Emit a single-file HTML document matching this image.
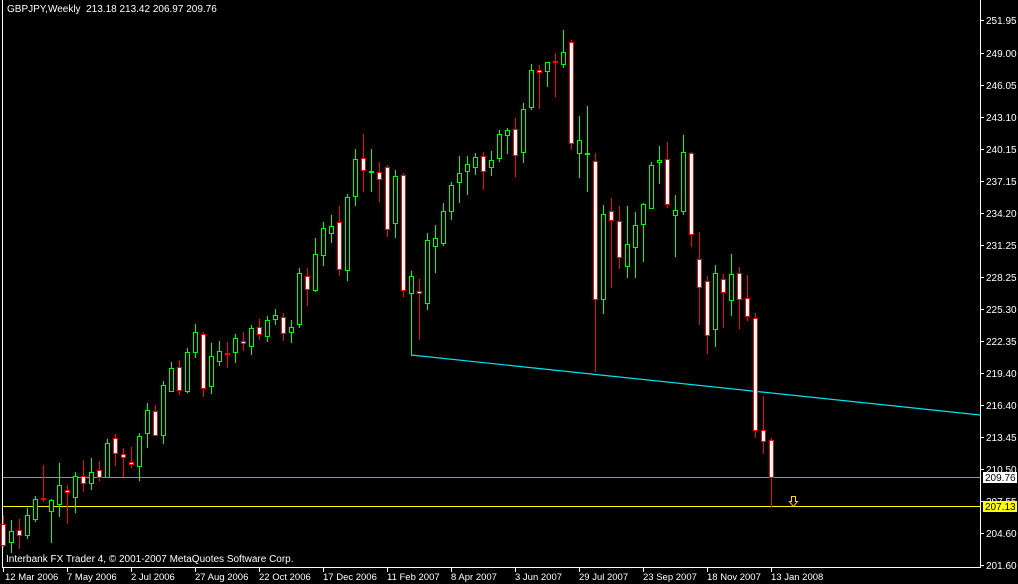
<!DOCTYPE html>
<html><head><meta charset="utf-8"><style>
html,body{margin:0;padding:0;background:#000;width:1018px;height:584px;overflow:hidden}
svg{display:block}
text{font-family:"Liberation Sans","DejaVu Sans",sans-serif;font-size:10px;fill:#fff}
.d text{font-size:9.5px}
</style></head><body>
<svg width="1018" height="584" viewBox="0 0 1018 584" shape-rendering="crispEdges">
<rect width="1018" height="584" fill="#000"/>
<path d="M2.5 0V567.5H980.5V0" stroke="#fff" fill="none"/>
<path d="M3.5 567V572M67.5 567V572M131.5 567V572M195.5 567V572M259.5 567V572M323.5 567V572M387.5 567V572M451.5 567V572M515.5 567V572M579.5 567V572M643.5 567V572M707.5 567V572M771.5 567V572" stroke="#fff"/>
<path d="M980 20.5H984M980 53.5H984M980 85.5H984M980 117.5H984M980 149.5H984M980 181.5H984M980 213.5H984M980 245.5H984M980 277.5H984M980 309.5H984M980 341.5H984M980 373.5H984M980 405.5H984M980 437.5H984M980 469.5H984M980 501.5H984M980 533.5H984M980 565.5H984" stroke="#fff"/>
<g>
<text x="986" y="24">251.95</text><text x="986" y="57">249.00</text><text x="986" y="89">246.05</text><text x="986" y="121">243.10</text><text x="986" y="153">240.15</text><text x="986" y="185">237.15</text><text x="986" y="217">234.20</text><text x="986" y="249">231.25</text><text x="986" y="281">228.25</text><text x="986" y="313">225.30</text><text x="986" y="345">222.35</text><text x="986" y="377">219.40</text><text x="986" y="409">216.40</text><text x="986" y="441">213.45</text><text x="986" y="473">210.50</text><text x="986" y="505">207.55</text><text x="986" y="537">204.60</text><text x="986" y="569">201.60</text>
</g>
<path d="M3 477.5H980" stroke="#8a96a6"/>
<path d="M3 506.5H980" stroke="#ffff00"/>
<rect x="983" y="472" width="34" height="11" fill="#fff"/>
<text x="985" y="481" style="fill:#000">209.76</text>
<rect x="983" y="501" width="34" height="11" fill="#ffff00"/>
<text x="985" y="510" style="fill:#000">207.13</text>
<line x1="411" y1="355" x2="980" y2="415" stroke="#00e5ee" shape-rendering="auto" stroke-width="1.2"/>
<path stroke="#00ff00" d="M11.5 520V553M27.5 508V539M35.5 496V522M51.5 499V543M59.5 463V517M75.5 472V513M91.5 458V490M107.5 439V477M139.5 433V481M147.5 403V448M163.5 381V444M171.5 362V392M187.5 348V393M195.5 324V358M211.5 343V394M219.5 341V366M235.5 334V363M251.5 325V355M267.5 316V342M275.5 309V325M291.5 320V343M299.5 268V328M315.5 238V292M323.5 222V266M331.5 215V243M347.5 194V281M355.5 149V206M371.5 149V192M395.5 170V238M411.5 271V356M427.5 233V310M435.5 225V273M443.5 203V246M451.5 182V220M459.5 156V203M467.5 156V195M475.5 153V175M491.5 151V176M499.5 130V162M507.5 128V154M523.5 103V163M531.5 64V110M547.5 62V87M563.5 30V68M579.5 116V178M587.5 106V192M603.5 205V314M627.5 206V278M635.5 212V278M643.5 203V262M651.5 162V209M659.5 146V184M675.5 195V257M683.5 135V215M715.5 265V347M731.5 254V316"/>
<g fill="#000" stroke="#00ff00">
<rect x="9.5" y="531.5" width="4" height="11"/><rect x="25.5" y="515.5" width="4" height="20"/><rect x="33.5" y="499.5" width="4" height="20"/><rect x="49.5" y="500.5" width="4" height="11"/><rect x="57.5" y="485.5" width="4" height="19"/><rect x="73.5" y="476.5" width="4" height="21"/><rect x="89.5" y="472.5" width="4" height="11"/><rect x="105.5" y="443.5" width="4" height="34"/><rect x="137.5" y="436.5" width="4" height="30"/><rect x="145.5" y="410.5" width="4" height="23"/><rect x="161.5" y="385.5" width="4" height="50"/><rect x="169.5" y="368.5" width="4" height="23"/><rect x="185.5" y="352.5" width="4" height="39"/><rect x="193.5" y="332.5" width="4" height="20"/><rect x="209.5" y="356.5" width="4" height="30"/><rect x="217.5" y="351.5" width="4" height="10"/><rect x="233.5" y="338.5" width="4" height="14"/><rect x="249.5" y="328.5" width="4" height="18"/><rect x="265.5" y="320.5" width="4" height="16"/><rect x="273.5" y="315.5" width="4" height="4"/><rect x="289.5" y="327.5" width="4" height="5"/><rect x="297.5" y="273.5" width="4" height="51"/><rect x="313.5" y="254.5" width="4" height="36"/><rect x="321.5" y="228.5" width="4" height="27"/><rect x="329.5" y="226.5" width="4" height="7"/><rect x="345.5" y="197.5" width="4" height="73"/><rect x="353.5" y="159.5" width="4" height="37"/><rect x="369.5" y="171.5" width="4" height="1"/><rect x="393.5" y="176.5" width="4" height="47"/><rect x="409.5" y="276.5" width="4" height="17"/><rect x="425.5" y="240.5" width="4" height="63"/><rect x="433.5" y="238.5" width="4" height="8"/><rect x="441.5" y="211.5" width="4" height="32"/><rect x="449.5" y="185.5" width="4" height="26"/><rect x="457.5" y="173.5" width="4" height="9"/><rect x="465.5" y="164.5" width="4" height="7"/><rect x="473.5" y="157.5" width="4" height="10"/><rect x="489.5" y="160.5" width="4" height="7"/><rect x="497.5" y="134.5" width="4" height="24"/><rect x="505.5" y="130.5" width="4" height="5"/><rect x="521.5" y="109.5" width="4" height="43"/><rect x="529.5" y="70.5" width="4" height="37"/><rect x="545.5" y="62.5" width="4" height="9"/><rect x="561.5" y="52.5" width="4" height="12"/><rect x="577.5" y="140.5" width="4" height="13"/><rect x="585.5" y="153.5" width="4" height="1"/><rect x="601.5" y="214.5" width="4" height="85"/><rect x="625.5" y="244.5" width="4" height="22"/><rect x="633.5" y="225.5" width="4" height="22"/><rect x="641.5" y="204.5" width="4" height="20"/><rect x="649.5" y="165.5" width="4" height="43"/><rect x="657.5" y="160.5" width="4" height="2"/><rect x="673.5" y="210.5" width="4" height="5"/><rect x="681.5" y="152.5" width="4" height="59"/><rect x="713.5" y="273.5" width="4" height="56"/><rect x="729.5" y="274.5" width="4" height="26"/>
</g>
<path stroke="#ff0000" d="M3.5 515V548M19.5 519V549M43.5 465V502M67.5 485V524M83.5 460V492M99.5 461V481M115.5 434V466M123.5 448V477M131.5 447V468M155.5 405V436M179.5 360V395M203.5 332V397M227.5 342V368M243.5 332V351M259.5 319V340M283.5 313V341M307.5 268V306M339.5 206V276M363.5 134V192M379.5 162V202M387.5 165V237M403.5 173V297M419.5 279V340M483.5 152V190M515.5 118V177M539.5 65V109M555.5 53V97M571.5 40V150M595.5 153V372M611.5 198V288M619.5 206V269M667.5 142V208M691.5 152V247M699.5 232V325M707.5 276V354M723.5 274V328M739.5 267V329M747.5 275V321M755.5 313V438M763.5 396V454M771.5 438V507"/>
<g fill="#fff" stroke="#ff0000">
<rect x="1.5" y="524.5" width="4" height="21"/><rect x="17.5" y="530.5" width="4" height="5"/><rect x="41.5" y="498.5" width="4" height="1"/><rect x="65.5" y="490.5" width="4" height="2"/><rect x="81.5" y="476.5" width="4" height="7"/><rect x="97.5" y="470.5" width="4" height="7"/><rect x="113.5" y="438.5" width="4" height="15"/><rect x="121.5" y="454.5" width="4" height="3"/><rect x="129.5" y="462.5" width="4" height="2"/><rect x="153.5" y="411.5" width="4" height="24"/><rect x="177.5" y="367.5" width="4" height="23"/><rect x="201.5" y="334.5" width="4" height="54"/><rect x="225.5" y="353.5" width="4" height="1"/><rect x="241.5" y="341.5" width="4" height="2"/><rect x="257.5" y="327.5" width="4" height="7"/><rect x="281.5" y="317.5" width="4" height="16"/><rect x="305.5" y="276.5" width="4" height="13"/><rect x="337.5" y="222.5" width="4" height="47"/><rect x="361.5" y="158.5" width="4" height="12"/><rect x="377.5" y="172.5" width="4" height="7"/><rect x="385.5" y="167.5" width="4" height="62"/><rect x="401.5" y="175.5" width="4" height="115"/><rect x="417.5" y="291.5" width="4" height="2"/><rect x="481.5" y="156.5" width="4" height="15"/><rect x="513.5" y="129.5" width="4" height="26"/><rect x="537.5" y="70.5" width="4" height="2"/><rect x="553.5" y="61.5" width="4" height="1"/><rect x="569.5" y="42.5" width="4" height="101"/><rect x="593.5" y="161.5" width="4" height="138"/><rect x="609.5" y="211.5" width="4" height="9"/><rect x="617.5" y="221.5" width="4" height="36"/><rect x="665.5" y="159.5" width="4" height="45"/><rect x="689.5" y="153.5" width="4" height="81"/><rect x="697.5" y="259.5" width="4" height="28"/><rect x="705.5" y="281.5" width="4" height="54"/><rect x="721.5" y="279.5" width="4" height="13"/><rect x="737.5" y="273.5" width="4" height="26"/><rect x="745.5" y="298.5" width="4" height="18"/><rect x="753.5" y="318.5" width="4" height="112"/><rect x="761.5" y="430.5" width="4" height="11"/><rect x="769.5" y="440.5" width="4" height="37"/>
</g>
<path d="M791.5 496.5H795.5V501.5H797.5L793.5 506.5L789.5 501.5H791.5Z" fill="none" stroke="#ffd700" shape-rendering="auto"/>
<text x="7" y="12">GBPJPY,Weekly&#160;&#160;213.18 213.42 206.97 209.76</text>
<text x="6" y="562">Interbank FX Trader 4, © 2001-2007 MetaQuotes Software Corp.</text>
<g class="d">
<text x="5" y="580">12 Mar 2006</text><text x="67" y="580">7 May 2006</text><text x="131" y="580">2 Jul 2006</text><text x="195" y="580">27 Aug 2006</text><text x="259" y="580">22 Oct 2006</text><text x="323" y="580">17 Dec 2006</text><text x="387" y="580">11 Feb 2007</text><text x="451" y="580">8 Apr 2007</text><text x="515" y="580">3 Jun 2007</text><text x="579" y="580">29 Jul 2007</text><text x="643" y="580">23 Sep 2007</text><text x="707" y="580">18 Nov 2007</text><text x="771" y="580">13 Jan 2008</text>
</g>
</svg>
</body></html>
